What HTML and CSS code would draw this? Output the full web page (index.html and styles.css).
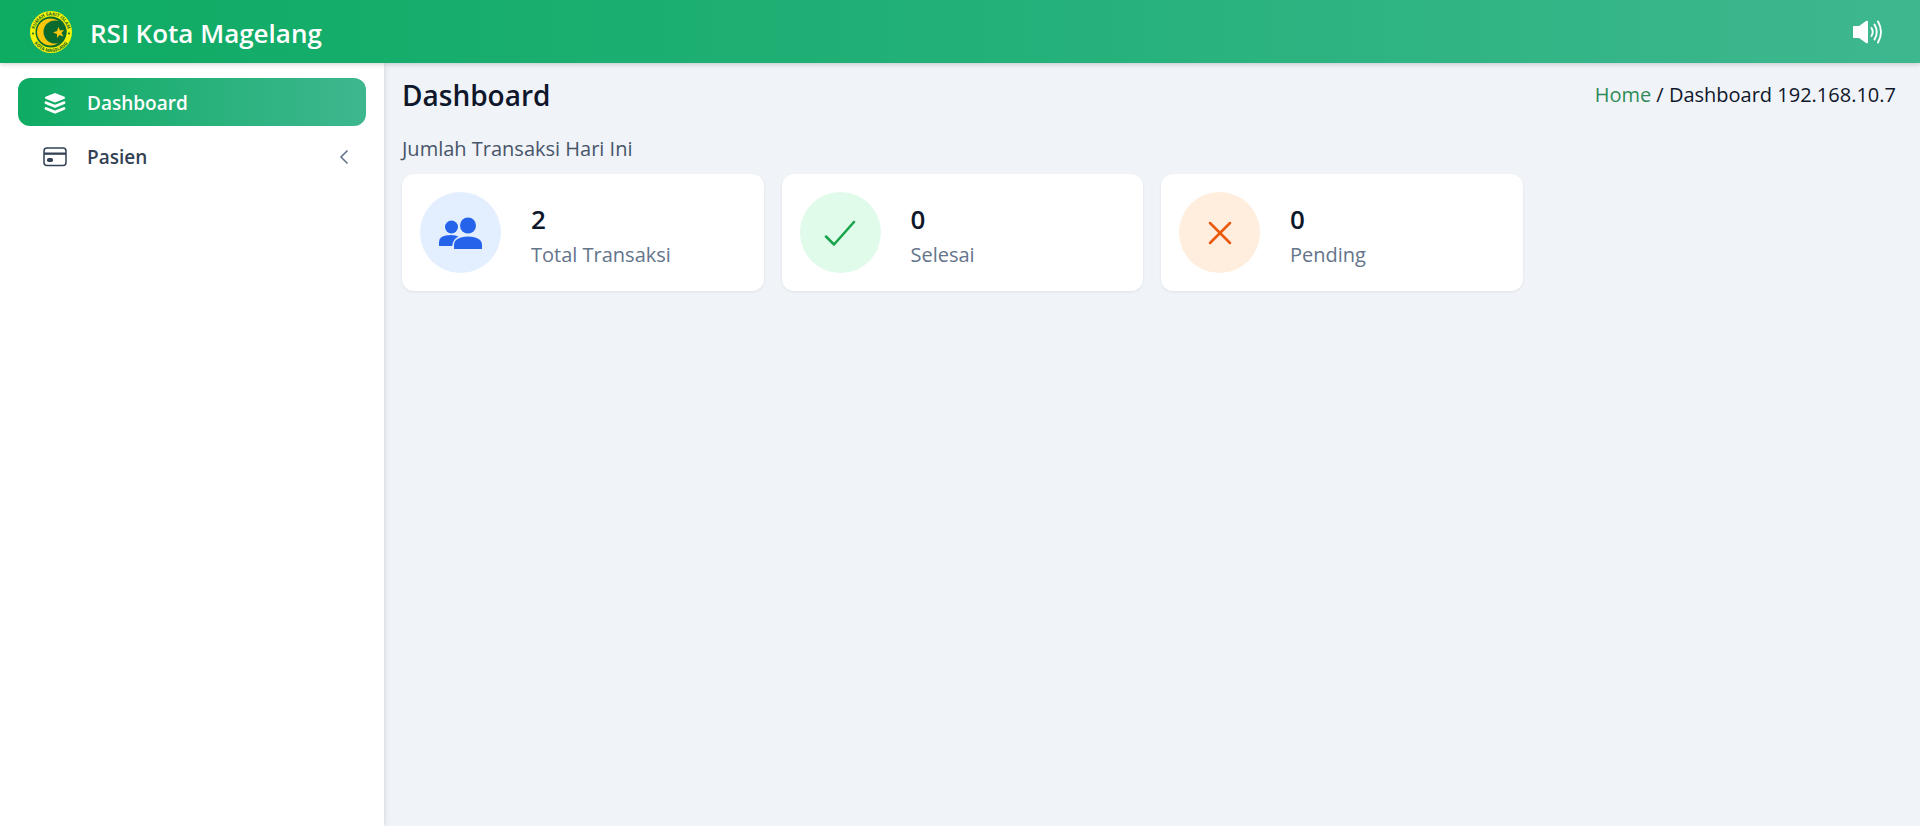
FILE: index.html
```html
<!DOCTYPE html>
<html lang="id">
<head>
  <meta charset="utf-8">
  <meta name="viewport" content="width=device-width, initial-scale=1">
  <title>RSI Kota Magelang</title>
  <link rel="stylesheet" href="styles.css">
</head>
<body>
  <header class="topbar">
    <a class="brand" href="#">
      <svg class="brand-logo" viewBox="0 0 84 84" aria-hidden="true">
        <defs>
          <path id="ring-top" d="M9 42a33 33 0 0 1 66 0"/>
          <path id="ring-bottom" d="M2 42a40 40 0 0 0 80 0"/>
        </defs>
        <circle cx="42" cy="42" r="42" fill="#f4f307"/>
        <circle cx="42" cy="42" r="31" fill="#0b6b2f"/>
        <circle cx="41" cy="42" r="27" fill="#fdc70c"/>
        <circle cx="50" cy="42" r="23" fill="#0b6b2f"/>
        <path d="M57 32l3 7 8-1-5 6 4 7-8-3-5 6v-8l-8-3 8-3z" fill="#fdc70c"/>
        <circle cx="6" cy="45" r="2" fill="#12602e"/>
        <circle cx="78" cy="45" r="2" fill="#12602e"/>
        <text class="ring-text"><textPath href="#ring-top" startOffset="50%" text-anchor="middle">RUMAH SAKIT ISLAM</textPath></text>
        <text class="ring-text"><textPath href="#ring-bottom" startOffset="50%" text-anchor="middle">KOTA MAGELANG</textPath></text>
      </svg>
      <span class="brand-name">RSI Kota Magelang</span>
    </a>
    <button class="sound" type="button" aria-label="Suara">
      <svg viewBox="0 0 30 24" width="30" height="24" aria-hidden="true">
        <path d="M2 6h5l7-5q2-1 2 1v20q0 2-2 1l-7-5H2q-1 0-1-1V7q0-1 1-1z" fill="currentColor"/>
        <path d="M19.500 8q2.500 4 0 8M22.500 4.500q4.500 7.500 0 15M26 1.500q6 10.500 0 21" fill="none" stroke="currentColor" stroke-width="1.900" stroke-linecap="round"/>
      </svg>
    </button>
  </header>

  <div class="layout">
    <nav class="sidebar" aria-label="Menu utama">
      <a class="nav-item active" href="#" aria-current="page">
        <svg class="nav-icon" viewBox="0 0 24 24" aria-hidden="true">
          <path d="M12 2 21.500 5.800Q22.800 6.800 21.500 7.800L12 11.600 2.500 7.800Q1.200 6.800 2.500 5.800z" fill="currentColor"/>
          <path d="M3 11.800 12 15.400 21 11.800M3 17.500 12 21.100 21 17.500" fill="none" stroke="currentColor" stroke-width="2.800" stroke-linecap="round" stroke-linejoin="round"/>
        </svg>
        <span>Dashboard</span>
      </a>
      <button class="nav-item" type="button" aria-expanded="false">
        <svg class="nav-icon" viewBox="0 0 24 24" aria-hidden="true">
          <rect x="1" y="3" width="22" height="17.500" rx="3" fill="none" stroke="currentColor" stroke-width="1.500"/>
          <path d="M1 7.500h22v2.300H1z" fill="currentColor"/>
          <rect x="4" y="13" width="6" height="4" rx="1.800" fill="currentColor"/>
        </svg>
        <span>Pasien</span>
        <svg class="nav-chevron" viewBox="0 0 10 16" width="10" height="16" aria-hidden="true">
          <path d="M8.500 1.500 2 8l6.500 6.500" fill="none" stroke="currentColor" stroke-width="1.600"/>
        </svg>
      </button>
    </nav>

    <main class="content">
      <div class="page-head">
        <h1>Dashboard</h1>
        <div class="breadcrumb"><a href="#">Home</a> / Dashboard 192.168.10.7</div>
      </div>
      <h2 class="section-title">Jumlah Transaksi Hari Ini</h2>
      <section class="cards">
        <article class="card">
          <div class="badge blue">
            <svg viewBox="0 0 44 32" width="44" height="32" aria-hidden="true">
              <g fill="currentColor">
                <circle cx="12.500" cy="10" r="6.500"/>
                <circle cx="29" cy="8.500" r="8"/>
                <path d="M0 29v-4q0-7 12-7q5 0 7.500 1.500Q13.500 22.500 13.300 29z"/>
                <path d="M15 32v-4q0-8 14-8.500q14 .500 14 8.500v4z"/>
              </g>
            </svg>
          </div>
          <div class="figures"><div class="value">2</div><div class="label">Total Transaksi</div></div>
        </article>
        <article class="card">
          <div class="badge green">
            <svg viewBox="0 0 32 26" width="32" height="26" aria-hidden="true">
              <path d="M2 16.500 10 24.500 30 2" fill="none" stroke="currentColor" stroke-width="2.500" stroke-linecap="round" stroke-linejoin="round"/>
            </svg>
          </div>
          <div class="figures"><div class="value">0</div><div class="label">Selesai</div></div>
        </article>
        <article class="card">
          <div class="badge orange">
            <svg viewBox="0 0 24 24" width="24" height="24" aria-hidden="true">
              <path d="M2 2 22 22M22 2 2 22" fill="none" stroke="currentColor" stroke-width="2.500" stroke-linecap="round"/>
            </svg>
          </div>
          <div class="figures"><div class="value">0</div><div class="label">Pending</div></div>
        </article>
      </section>
    </main>
  </div>
</body>
</html>
```
FILE: styles.css
```css
* {
  box-sizing: border-box;
}

body {
  margin: 0;
  min-height: 100vh;
  display: flex;
  flex-direction: column;
  font: 20px/28px "Segoe UI", "Open Sans", "Noto Sans", sans-serif;
  color: #0f172a;
  background: #f0f3f8;
}

a {
  color: inherit;
  text-decoration: none;
}

button {
  font: inherit;
  color: inherit;
  background: none;
  border: 0;
  padding: 0;
  cursor: pointer;
}

svg {
  display: block;
}

h1,
h2 {
  margin: 0;
}

.topbar {
  display: flex;
  align-items: center;
  justify-content: space-between;
  height: 63px;
  padding: 0 38px 0 30px;
  color: #fff;
  background: linear-gradient(to right, #0eab63, #22b078 50%, #33b586 80%, #3eb78f);
  box-shadow: 0 1px 5px rgb(0 0 0 / 20%);
  z-index: 2;
}

.brand {
  display: flex;
  align-items: center;
  gap: 18px;
  font-size: 26px;
  line-height: 36px;
  font-weight: 600;
}

.brand-name {
  padding-top: 2px;
}

.brand-logo {
  width: 42px;
  height: 42px;
}

.ring-text {
  font-size: 9px;
  font-weight: 700;
  fill: #12602e;
}

.layout {
  flex: 1;
  display: flex;
}

.sidebar {
  display: flex;
  flex-direction: column;
  gap: 6px;
  width: 384px;
  flex-shrink: 0;
  padding: 15px 18px;
  background: #fff;
  box-shadow: 0 0 6px rgb(0 0 0 / 14%);
  z-index: 1;
}

.nav-item {
  display: flex;
  align-items: center;
  gap: 20px;
  width: 100%;
  height: 48px;
  padding: 2px 17px 0 25px;
  border-radius: 12px;
  font-size: 19px;
  font-weight: 600;
  color: #334155;
}

.nav-item.active {
  color: #fff;
  background: linear-gradient(to right, #0eab63, #3eb78f);
}

.nav-icon {
  width: 24px;
  height: 24px;
}

.nav-chevron {
  margin-left: auto;
  color: #64748b;
}

.content {
  flex: 1;
  padding: 12px 18px;
}

.page-head {
  display: flex;
  align-items: center;
  justify-content: space-between;
  height: 40px;
  padding-right: 6px;
}

.page-head h1 {
  font-size: 28px;
  line-height: 40px;
  font-weight: 600;
}

.breadcrumb a {
  color: #2e8b57;
}

.section-title {
  margin-top: 20px;
  font-size: 20px;
  line-height: 28px;
  font-weight: 400;
  color: #475569;
}

.cards {
  display: grid;
  grid-template-columns: repeat(4, 1fr);
  gap: 18px;
  margin-top: 11px;
}

.card {
  display: flex;
  align-items: center;
  gap: 30px;
  padding: 18px;
  border-radius: 12px;
  background: #fff;
  box-shadow: 0 1px 3px rgb(15 23 42 / 8%);
}

.badge {
  display: grid;
  place-items: center;
  width: 81px;
  height: 81px;
  border-radius: 50%;
}

.blue {
  color: #2563eb;
  background: #e3effe;
}

.green {
  color: #16a34a;
  background: #e0fbea;
}

.orange {
  color: #ea580c;
  background: #ffeedd;
}

.figures {
  padding-top: 9px;
}

.value {
  font-size: 26px;
  line-height: 36px;
  font-weight: 600;
}

.label {
  line-height: 36px;
  color: #64748b;
}
```
